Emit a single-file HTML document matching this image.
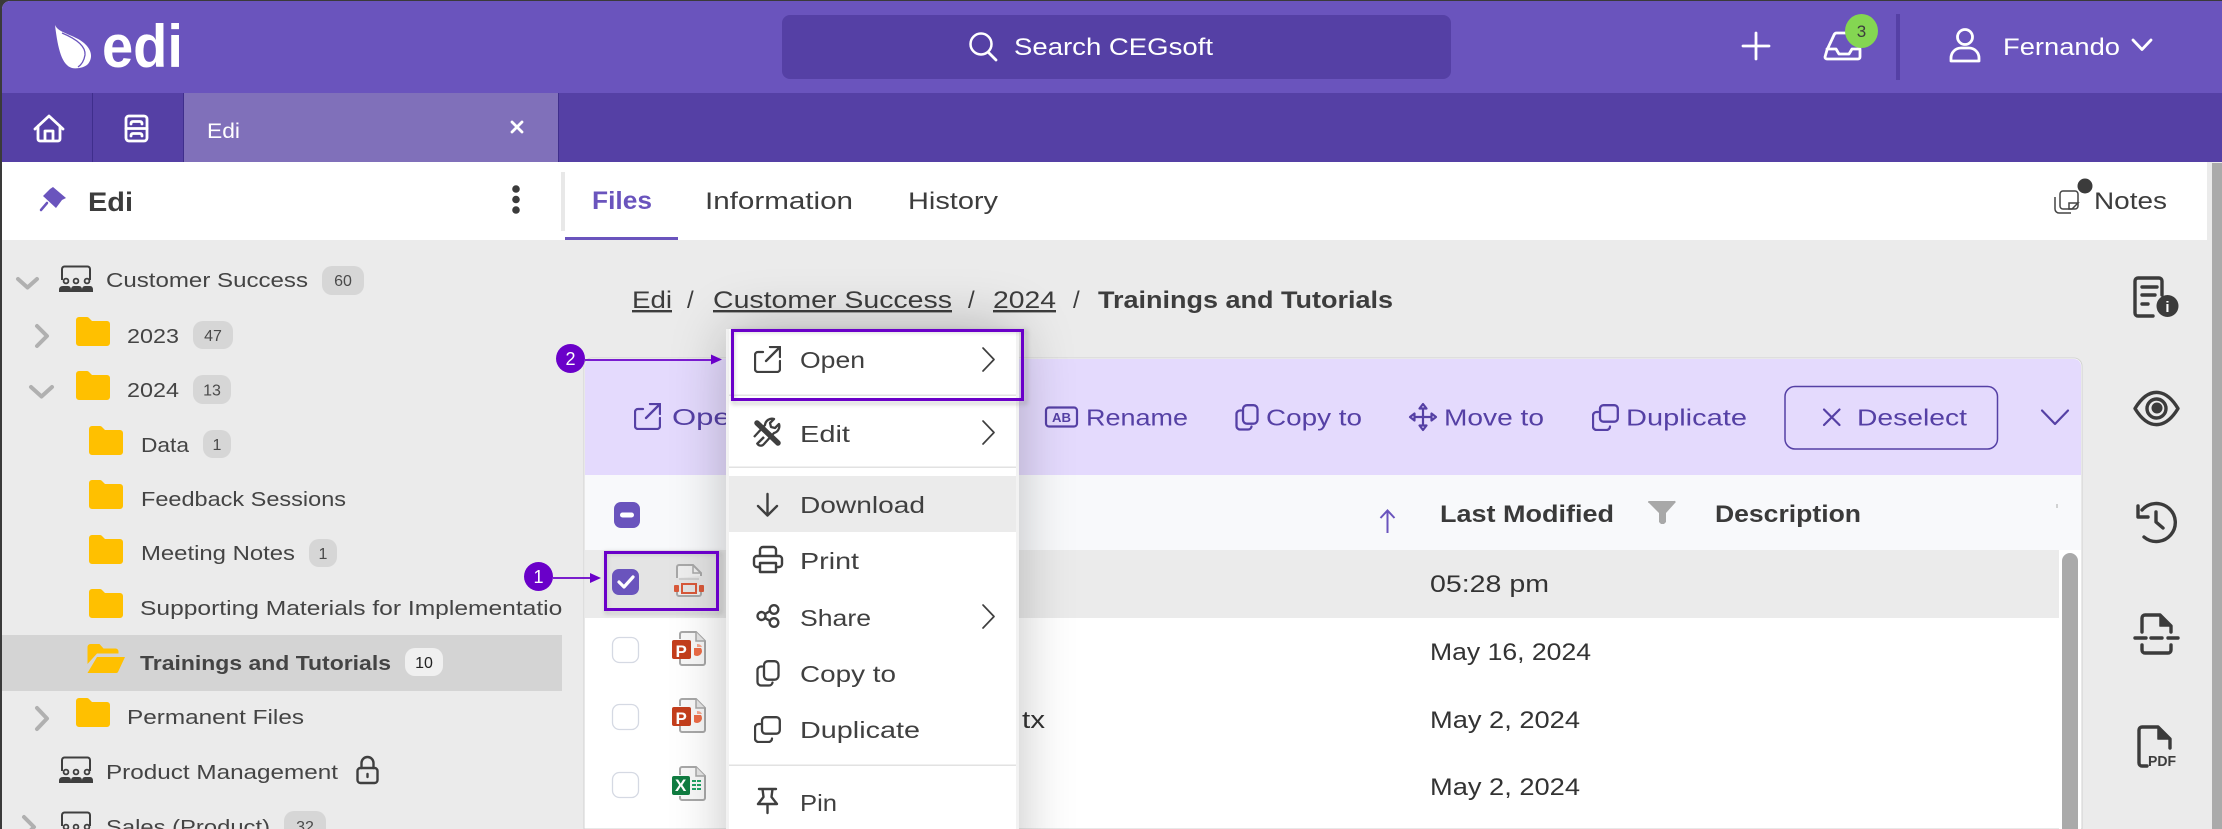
<!DOCTYPE html>
<html lang="en"><head><meta charset="utf-8"><title>Edi</title>
<style>
html,body{margin:0;padding:0;width:2222px;height:829px;overflow:hidden;background:#ebebeb}
svg{display:block}
text{font-family:"Liberation Sans",sans-serif;fill:#3d3d3d}
.t{font-size:20.5px;fill:#444}
.m{font-size:23.5px;fill:#404040}
.b{font-size:23.5px;fill:#5540a5}
.d{font-size:24px;fill:#333}
.h{font-size:24px;font-weight:700;fill:#3a3a3a}
.c{font-size:16px;text-anchor:middle;fill:#4a4a4a}
.w{fill:#fff}
.i{fill:none;stroke:#3f3f3f;stroke-width:2.4;stroke-linecap:round;stroke-linejoin:round}
.p{fill:none;stroke:#5540a5;stroke-width:2.2;stroke-linecap:round;stroke-linejoin:round}
.wi{fill:none;stroke:#fff;stroke-width:2.8;stroke-linecap:round;stroke-linejoin:round}
.g{fill:none;stroke:#b0b0b0;stroke-width:4;stroke-linecap:round;stroke-linejoin:round}
.n{fill:none;stroke:#3b3b3b;stroke-width:3.4;stroke-linecap:round;stroke-linejoin:round}
.cv{fill:none;stroke:#3f3f3f;stroke-width:1.7;stroke-linecap:round;stroke-linejoin:round}
</style></head><body>
<svg width="2222" height="829" viewBox="0 0 2222 829" xmlns="http://www.w3.org/2000/svg">
<defs>
<filter id="bl" x="-60%" y="-60%" width="220%" height="220%"><feGaussianBlur stdDeviation="30"/></filter>
<filter id="sb" x="-10%" y="-10%" width="120%" height="120%"><feGaussianBlur stdDeviation="2"/></filter>
<symbol id="folder" width="34" height="29" viewBox="0 0 34 29"><path d="M3 0h8a3 3 0 0 1 2 1l3 3h15a3 3 0 0 1 3 3v19a3 3 0 0 1-3 3H3a3 3 0 0 1-3-3V3a3 3 0 0 1 3-3z" fill="#ffc000"/></symbol>
<symbol id="team" width="34" height="28" viewBox="0 0 34 28"><path d="M3 15V4a2.5 2.5 0 0 1 2.5-2.5h23A2.5 2.5 0 0 1 31 4v11" fill="none" stroke="#3f3f3f" stroke-width="2"/><circle cx="7" cy="16" r="2.4" fill="none" stroke="#3f3f3f" stroke-width="1.8"/><circle cx="17" cy="16" r="2.4" fill="none" stroke="#3f3f3f" stroke-width="1.8"/><circle cx="28" cy="16" r="2.4" fill="none" stroke="#3f3f3f" stroke-width="1.8"/><path d="M0 27v-2q0-4 4-4h5q3 0 3 4v2zM12 27v-2q0-4 3-4h5q3 0 3 4v2zM23 27v-2q0-4 3-4h5q3 0 3 4v2z" fill="#3f3f3f"/></symbol>
<symbol id="open" width="27" height="27" viewBox="0 0 27 27"><path d="M9 6H4a3 3 0 0 0-3 3v14a3 3 0 0 0 3 3h19a3 3 0 0 0 3-3v-8M12 15L25 2M16 1h10v10" fill="none" stroke="currentColor" stroke-width="2.3" stroke-linecap="round" stroke-linejoin="round"/></symbol>
<symbol id="copy" width="24" height="27" viewBox="0 0 24 27"><rect x="8" y="1.2" width="14.5" height="18.5" rx="4" fill="none" stroke="currentColor" stroke-width="2.3"/><path d="M6 6.5H5a3.5 3.5 0 0 0-3.5 3.5v12A3.5 3.5 0 0 0 5 25.5h8a3.5 3.5 0 0 0 3.5-3" fill="none" stroke="currentColor" stroke-width="2.3" stroke-linecap="round"/></symbol>
<symbol id="dup" width="27" height="27" viewBox="0 0 27 27"><rect x="8" y="1.2" width="17.8" height="16.5" rx="3.5" fill="none" stroke="currentColor" stroke-width="2.3"/><path d="M6 8H4.5A3.5 3.5 0 0 0 1 11.5v11A3.5 3.5 0 0 0 4.5 26h10a3.5 3.5 0 0 0 3.5-3.5" fill="none" stroke="currentColor" stroke-width="2.3" stroke-linecap="round"/></symbol>
<symbol id="ppt" width="34" height="35" viewBox="0 0 34 35"><path d="M8 8V3a2 2 0 0 1 2-2h14l9 9v22a2 2 0 0 1-2 2H10a2 2 0 0 1-2-2v-5" fill="#f8f8f8" stroke="#a8a8a8" stroke-width="2"/><path d="M24 1v9h9" fill="#e6e6e6" stroke="#a8a8a8" stroke-width="1.5"/><rect x="0" y="9" width="19" height="19" rx="2" fill="#c43e1c"/><path d="M22 17v7a5 5 0 0 0 7-7z" fill="#ed6c47"/><path d="M25 13a5 5 0 0 1 5 3h-5z" fill="#f6a78f"/></symbol>
<clipPath id="cl"><rect x="0" y="0" width="2222" height="829"/></clipPath>
</defs>
<g clip-path="url(#cl)">

<!-- top bar -->
<rect width="2222" height="829" fill="#3a3a3a"/>
<path d="M10 1H2222V829H2V9a8 8 0 0 1 8-8z" fill="#ebebeb"/>
<path d="M10 1H2222V94H2V9a8 8 0 0 1 8-8z" fill="#6a54bd"/>
<rect x="2" y="93" width="2220" height="69" fill="#5540a5"/>
<rect x="184" y="93" width="374" height="69" fill="#8070ba"/>
<rect x="92" y="93" width="1" height="69" fill="#3f2e8c"/>
<rect x="183" y="93" width="1" height="69" fill="#3f2e8c"/>
<rect x="558" y="93" width="1" height="69" fill="#3f2e8c"/>
<path d="M55 25C58 33 75 35 84 43C92 50 93 58 88 64C84 68 76 69 72 68C62 65 58 50 55 25z" fill="#fff"/>
<path d="M62 33C74 38 86 45 85 55C84 61 81 65 78 67" fill="none" stroke="#6a54bd" stroke-width="1.3"/>
<text x="102" y="67" font-size="60" font-weight="700" textLength="81" lengthAdjust="spacingAndGlyphs" class="w">edi</text>
<rect x="782" y="15" width="669" height="64" rx="8" fill="#5540a5"/>
<circle cx="981" cy="44" r="10.5" fill="none" stroke="#fff" stroke-width="2.5"/><path d="M989 53l7 7" class="wi"/>
<text x="1014" y="55" font-size="24" textLength="199" lengthAdjust="spacingAndGlyphs" class="w">Search CEGsoft</text>
<path d="M1756 33v26M1743 46h26" class="wi"/>
<path d="M1827 50L1834 35a3 3 0 0 1 3-2h17a3 3 0 0 1 3 2l3 15v7a2 2 0 0 1-2 2h-31a2 2 0 0 1-2-2zM1827 49h9l3 5h10l3-5h8" class="wi" stroke-width="3"/>
<ellipse cx="1861.5" cy="31" rx="16.5" ry="17" fill="#84d652"/>
<text x="1861.5" y="37" font-size="17" text-anchor="middle">3</text>
<rect x="1896" y="14" width="4" height="66" fill="#5540a5"/>
<circle cx="1965" cy="37" r="7.5" class="wi"/><path d="M1951 61v-3a10 10 0 0 1 10-10h8a10 10 0 0 1 10 10v3z" class="wi"/>
<text x="2003" y="55" font-size="24" textLength="117" lengthAdjust="spacingAndGlyphs" class="w">Fernando</text>
<path d="M2133 40l9 9.5 9-9.5" class="wi"/>

<!-- tabs -->
<path d="M35 129L49 116L63 129M38 126v13a2 2 0 0 0 2 2h18a2 2 0 0 0 2-2v-13M45 141v-10h8v10" class="wi"/>
<rect x="126" y="116" width="21" height="25" rx="3" class="wi"/><path d="M126 128.5h21M131 124q0-2.500 2-2.500h7q2 0 2 2.500M131 136q0-2.500 2-2.500h7q2 0 2 2.500" class="wi" stroke-width="2"/>
<text x="207" y="138" font-size="21" textLength="33" lengthAdjust="spacingAndGlyphs" class="w">Edi</text>
<path d="M512 122l10 10M522 122l-10 10" class="wi" stroke-width="1.6"/>

<!-- sub header -->
<rect x="2" y="162" width="2205" height="78" fill="#fff"/>
<path d="M53 187l13 11-4 2-6 8-13-12 7-7z" fill="#6a54bd"/><path d="M47 203l-6 7" stroke="#6a54bd" stroke-width="2.5" stroke-linecap="round"/>
<text x="88" y="211" font-size="27" font-weight="700" textLength="45" lengthAdjust="spacingAndGlyphs">Edi</text>
<circle cx="516" cy="189" r="3.8" fill="#3b3b3b"/><circle cx="516" cy="199.5" r="3.8" fill="#3b3b3b"/><circle cx="516" cy="210" r="3.8" fill="#3b3b3b"/>
<rect x="561" y="172" width="4" height="59" fill="#e8e8e8"/>
<text x="592" y="209" font-size="25" font-weight="700" textLength="60" lengthAdjust="spacingAndGlyphs" style="fill:#6a54bd">Files</text>
<rect x="565" y="237" width="113" height="3" fill="#6a54bd"/>
<text x="705" y="209" font-size="24" textLength="148" lengthAdjust="spacingAndGlyphs">Information</text>
<text x="908" y="209" font-size="24" textLength="90" lengthAdjust="spacingAndGlyphs">History</text>
<rect x="2060" y="191" width="18" height="18" rx="3" fill="none" stroke="#444" stroke-width="1.5"/><path d="M2055 197v12a4 4 0 0 0 4 4h12M2078 203l-6 6h-3v-6z" fill="none" stroke="#444" stroke-width="1.5"/>
<circle cx="2085" cy="186" r="7.5" fill="#3b3b3b"/>
<text x="2094" y="209" font-size="24" textLength="73" lengthAdjust="spacingAndGlyphs">Notes</text>
<rect x="2212" y="163" width="10" height="666" fill="#aaa"/>

<!-- tree -->
<path d="M18 279l9.5 8.500 9.500-8.500" class="g"/>
<use href="#team" x="59" y="265"/>
<text x="106" y="287" class="t" textLength="202" lengthAdjust="spacingAndGlyphs">Customer Success</text>
<rect x="322" y="266" width="42" height="29" rx="10" fill="#d6d6d6"/><text x="343" y="286" class="c">60</text>

<path d="M37 326l10 10-10 10" class="g"/>
<use href="#folder" x="76" y="317"/>
<text x="127" y="343" class="t" textLength="52" lengthAdjust="spacingAndGlyphs">2023</text>
<rect x="193" y="321" width="40" height="28" rx="10" fill="#d6d6d6"/><text x="213" y="341" class="c">47</text>

<path d="M31 387l10.5 9.500 10.500-9.500" class="g"/>
<use href="#folder" x="76" y="371"/>
<text x="127" y="397" class="t" textLength="52" lengthAdjust="spacingAndGlyphs">2024</text>
<rect x="193" y="375" width="38" height="29" rx="10" fill="#d6d6d6"/><text x="212" y="395.5" class="c">13</text>

<use href="#folder" x="89" y="426"/>
<text x="141" y="452" class="t" textLength="48" lengthAdjust="spacingAndGlyphs">Data</text>
<rect x="203" y="430" width="28" height="28" rx="10" fill="#d6d6d6"/><text x="217" y="450" class="c">1</text>

<use href="#folder" x="89" y="480"/>
<text x="141" y="506" class="t" textLength="205" lengthAdjust="spacingAndGlyphs">Feedback Sessions</text>

<use href="#folder" x="89" y="535"/>
<text x="141" y="560" class="t" textLength="154" lengthAdjust="spacingAndGlyphs">Meeting Notes</text>
<rect x="309" y="539" width="28" height="28" rx="10" fill="#d6d6d6"/><text x="323" y="559" class="c">1</text>

<use href="#folder" x="89" y="589"/>
<text x="140" y="615" class="t" textLength="436" lengthAdjust="spacingAndGlyphs">Supporting Materials for Implementation</text>

<rect x="2" y="635" width="560" height="56" fill="#d4d4d4"/>
<path d="M87.5 664V647a3 3 0 0 1 3-3h9l4 4.500h12a3 3 0 0 1 3 3v2H97z" fill="#ffc000"/><path d="M97 657h28l-7 15a2 2 0 0 1-2 1H87.5z" fill="#ffc000"/>
<text x="140" y="670" class="t" font-weight="700" textLength="251" lengthAdjust="spacingAndGlyphs">Trainings and Tutorials</text>
<rect x="405" y="648" width="38" height="28" rx="10" fill="#f0f0f0"/><text x="424" y="668" class="c" style="fill:#222">10</text>

<path d="M37 708l10 10.5-10 10.500" class="g"/>
<use href="#folder" x="76" y="698"/>
<text x="127" y="724" class="t" textLength="177" lengthAdjust="spacingAndGlyphs">Permanent Files</text>

<use href="#team" x="59" y="756"/>
<text x="106" y="779" class="t" textLength="232" lengthAdjust="spacingAndGlyphs">Product Management</text>
<rect x="357.5" y="768" width="20" height="15" rx="3" class="i" stroke-width="2"/><path d="M361.5 768v-5a6 6 0 0 1 12 0v5M367.500 774v3" class="i" stroke-width="2"/>

<path d="M24 817l10 10-10 10" class="g"/>
<use href="#team" x="59" y="811"/>
<text x="106" y="834" class="t" textLength="164" lengthAdjust="spacingAndGlyphs">Sales (Product)</text>
<rect x="284" y="811" width="42" height="29" rx="10" fill="#d6d6d6"/><text x="305" y="832" class="c">32</text>
<rect x="562" y="240" width="1520" height="589" fill="#ebebeb"/>

<!-- breadcrumb -->
<text x="632" y="308" font-size="24" textLength="40" lengthAdjust="spacingAndGlyphs" text-decoration="underline">Edi</text>
<text x="687" y="308" font-size="24">/</text>
<text x="713" y="308" font-size="24" textLength="239" lengthAdjust="spacingAndGlyphs" text-decoration="underline">Customer Success</text>
<text x="968" y="308" font-size="24">/</text>
<text x="993" y="308" font-size="24" textLength="63" lengthAdjust="spacingAndGlyphs" text-decoration="underline">2024</text>
<text x="1073" y="308" font-size="24">/</text>
<text x="1098" y="308" font-size="24" font-weight="700" textLength="295" lengthAdjust="spacingAndGlyphs">Trainings and Tutorials</text>

<!-- table panel -->
<path d="M584 366a8 8 0 0 1 8-8h1482a8 8 0 0 1 8 8v463H584z" fill="#fff" stroke="#d2d2d2" stroke-width="1"/>
<path d="M585 366a7 7 0 0 1 7-7h1482a7 7 0 0 1 7 7v109H585z" fill="#e4dafd"/>
<rect x="585" y="475" width="1496" height="75" fill="#f8f9fb"/>
<rect x="585" y="550" width="1474" height="68" fill="#ebebeb"/>
<rect x="2059" y="550" width="22" height="279" fill="#fff"/>
<path d="M2062 561a8 8 0 0 1 16 0v268h-16z" fill="#aaa"/>

<g style="color:#5540a5">
<use href="#open" x="634" y="403"/>
<text x="672" y="425" class="b" textLength="76" lengthAdjust="spacingAndGlyphs">Open</text>
<rect x="1046" y="407.5" width="31" height="19" rx="3" class="p"/>
<text x="1052" y="422" font-size="12.5" font-weight="700" style="fill:#5540a5" textLength="19" lengthAdjust="spacingAndGlyphs">AB</text>
<text x="1086" y="425.5" class="b" textLength="102" lengthAdjust="spacingAndGlyphs">Rename</text>
<use href="#copy" x="1235" y="404"/>
<text x="1266" y="425.5" class="b" textLength="96" lengthAdjust="spacingAndGlyphs">Copy to</text>
<path d="M1423 410v14M1416 417h14M1423 404l-3.500 4.500h7zM1423 430l-3.500-4.500h7zM1410 417l4.500-3.500v7zM1436 417l-4.500-3.500v7z" class="p"/>
<text x="1444" y="425.5" class="b" textLength="100" lengthAdjust="spacingAndGlyphs">Move to</text>
<use href="#dup" x="1592" y="404"/>
<text x="1626" y="425.5" class="b" textLength="121" lengthAdjust="spacingAndGlyphs">Duplicate</text>
</g>
<rect x="1785" y="386.5" width="212.5" height="62.5" rx="10" fill="none" stroke="#5540a5" stroke-width="1.5"/>
<path d="M1824 409.5l15.500 15.500M1839.500 409.500l-15.500 15.500" class="p"/>
<text x="1857" y="425.5" class="b" textLength="110" lengthAdjust="spacingAndGlyphs">Deselect</text>
<path d="M2042 410.5l13 13.500 13-13.500" class="p" stroke-width="1.8"/>

<!-- table header -->
<rect x="614" y="502" width="26" height="26" rx="7" fill="#6a54bd"/><rect x="620" y="512.5" width="14" height="5" rx="2.5" fill="#fff"/>
<path d="M1387.5 511v22M1380.500 518l7-7.500 7 7.500" fill="none" stroke="#6a54bd" stroke-width="2"/>
<text x="1440" y="522" class="h" textLength="174" lengthAdjust="spacingAndGlyphs">Last Modified</text>
<path d="M1649 501h25a1 1 0 0 1 1 2l-9 10v9l-2 2h-3l-2-2v-9l-10-10a1 1 0 0 1 0-2z" fill="#a8a8a8"/>
<text x="1715" y="522" class="h" textLength="146" lengthAdjust="spacingAndGlyphs">Description</text>
<rect x="2056.5" y="504" width="1" height="4" fill="#aaa"/>

<!-- rows -->
<text x="1430" y="592" class="d" textLength="119" lengthAdjust="spacingAndGlyphs">05:28 pm</text>
<text x="1430" y="660" class="d" textLength="161" lengthAdjust="spacingAndGlyphs">May 16, 2024</text>
<text x="1430" y="728" class="d" textLength="150" lengthAdjust="spacingAndGlyphs">May 2, 2024</text>
<text x="1430" y="795" class="d" textLength="150" lengthAdjust="spacingAndGlyphs">May 2, 2024</text>
<text x="1022" y="728" class="d" textLength="23" lengthAdjust="spacingAndGlyphs">tx</text>

<!-- selection -->
<rect x="604" y="551" width="115" height="60" fill="#e4e4e4"/>
<rect x="612" y="569" width="27" height="26" rx="7" fill="#6a54bd"/><path d="M619 582l5 5 9-10" fill="none" stroke="#fff" stroke-width="3.2" stroke-linecap="round" stroke-linejoin="round"/>
<path d="M677 578v-11a2 2 0 0 1 2-2h14l8 8v3M677 592v2a2 2 0 0 0 2 2h20a2 2 0 0 0 2-2v-2" fill="#eee" stroke="#a8a8a8" stroke-width="2"/>
<path d="M693 565v8h8" fill="none" stroke="#a8a8a8" stroke-width="1.5"/><path d="M679 579h20" stroke="#c8c8c8" stroke-width="1.5"/>
<rect x="682" y="584" width="14" height="9" fill="none" stroke="#d9593a" stroke-width="2"/>
<rect x="674" y="585" width="5" height="7" rx="1" fill="#d9593a"/><rect x="699" y="585" width="5" height="7" rx="1" fill="#d9593a"/>

<rect x="612.5" y="637.5" width="26" height="25" rx="7" fill="#fff" stroke="#d5d9e3" stroke-width="1.3"/>
<rect x="612.5" y="704.5" width="26" height="25" rx="7" fill="#fff" stroke="#d5d9e3" stroke-width="1.3"/>
<rect x="612.5" y="772.5" width="26" height="25" rx="7" fill="#fff" stroke="#d5d9e3" stroke-width="1.3"/>
<use href="#ppt" x="672" y="631"/><text x="675.5" y="657" font-size="17" font-weight="700" class="w">P</text>
<use href="#ppt" x="672" y="698"/><text x="675.5" y="724" font-size="17" font-weight="700" class="w">P</text>
<path d="M680 775v-6a2 2 0 0 1 2-2h14l9 9v22a2 2 0 0 1-2 2h-21a2 2 0 0 1-2-2v-2" fill="#f8f8f8" stroke="#a8a8a8" stroke-width="2"/><path d="M696 767v9h9" fill="#e6e6e6" stroke="#a8a8a8" stroke-width="1.5"/>
<rect x="672" y="776" width="18" height="19" rx="2" fill="#107c41"/><text x="675" y="791" font-size="17" font-weight="700" class="w">X</text>
<path d="M692 781h10M692 785h10M692 789h10" stroke="#21a366" stroke-width="2" stroke-dasharray="4 1"/>

<!-- menu shadow + menu -->
<rect x="729" y="329" width="287" height="560" fill="#000" opacity=".26" filter="url(#bl)"/>
<rect x="604" y="551" width="115" height="60" fill="none" stroke="#888" stroke-width="3" opacity=".35" transform="translate(2 2)" filter="url(#sb)"/>
<rect x="605.5" y="552.5" width="112" height="57" fill="none" stroke="#6a00c9" stroke-width="3"/>
<rect x="726" y="329" width="293" height="500" fill="#f2f2f2"/>
<rect x="729" y="329" width="287" height="500" fill="#fff"/>
<rect x="729" y="476" width="287" height="56" fill="#ebebeb"/>
<rect x="729" y="394.5" width="287" height="1.5" fill="#e2e2e2"/>
<rect x="729" y="466.5" width="287" height="1.5" fill="#e2e2e2"/>
<rect x="729" y="764.5" width="287" height="1.5" fill="#e2e2e2"/>

<g style="color:#3f3f3f">
<use href="#open" x="754" y="346"/>
<text x="800" y="368" class="m" textLength="65" lengthAdjust="spacingAndGlyphs">Open</text>
<path d="M983 348l11 11.5-11 11.500" class="cv"/>
<path d="M757 423l21 20" stroke="#3f3f3f" stroke-width="5.5" stroke-linecap="round"/>
<path d="M764 437l-7 7" stroke="#3f3f3f" stroke-width="2.5" fill="none"/><path d="M757 443a4 4 0 0 0 7 1l10-11a7 7 0 0 0 5-9l-4 4-4-1-1-4 4-4a7 7 0 0 0-9 6l-11 12" fill="none" stroke="#3f3f3f" stroke-width="2.3" stroke-linejoin="round"/>
<text x="800" y="442" class="m" textLength="50" lengthAdjust="spacingAndGlyphs">Edit</text>
<path d="M983 421l11 11.5-11 11.500" class="cv"/>
<path d="M767.5 494v21M758 506l9.500 9.500 9.500-9.500" class="i"/>
<text x="800" y="513" class="m" textLength="125" lengthAdjust="spacingAndGlyphs">Download</text>
<path d="M760 556v-6a3 3 0 0 1 3-3h10a3 3 0 0 1 3 3v6M760 567h-3a3 3 0 0 1-3-3v-5a3 3 0 0 1 3-3h22a3 3 0 0 1 3 3v5a3 3 0 0 1-3 3h-3M760 563h16v9h-16z" class="i"/>
<text x="800" y="569" class="m" textLength="59" lengthAdjust="spacingAndGlyphs">Print</text>
<circle cx="761.5" cy="616" r="4" class="i"/><circle cx="774" cy="609.5" r="4.3" class="i"/><circle cx="774" cy="622.5" r="4.3" class="i"/><path d="M765 614l5-3M765 618l5 3" class="i"/>
<text x="800" y="626" class="m" textLength="71" lengthAdjust="spacingAndGlyphs">Share</text>
<path d="M983 605l11 11.5-11 11.500" class="cv"/>
<use href="#copy" x="756" y="660"/>
<text x="800" y="682" class="m" textLength="96" lengthAdjust="spacingAndGlyphs">Copy to</text>
<use href="#dup" x="754" y="716"/>
<text x="800" y="738" class="m" textLength="120" lengthAdjust="spacingAndGlyphs">Duplicate</text>
<path d="M759 789h17M762.5 789l1 8-5.500 7h19l-5.500-7 1-8M767.500 804v9" class="i"/>
<text x="800" y="811" class="m" textLength="37" lengthAdjust="spacingAndGlyphs">Pin</text>
</g>

<!-- highlight 2 -->
<rect x="731" y="329" width="293" height="72" fill="none" stroke="#888" stroke-width="3" opacity=".4" transform="translate(2 2)" filter="url(#sb)"/>
<rect x="732.5" y="330.5" width="290" height="69" fill="none" stroke="#6a00c9" stroke-width="3"/>

<!-- callouts -->
<path d="M553 578h40" stroke="#6a00c9" stroke-width="1.8"/><path d="M590 573l11 5-11 5z" fill="#6a00c9"/>
<circle cx="538.5" cy="576.5" r="14.5" fill="#6a00c9"/>
<text x="538.5" y="583" font-size="18" text-anchor="middle" class="w">1</text>
<path d="M585 360h130" stroke="#6a00c9" stroke-width="1.8"/><path d="M711 354.5l11 5-11 5z" fill="#6a00c9"/>
<circle cx="570.5" cy="358.5" r="14.5" fill="#6a00c9"/>
<text x="570.5" y="365" font-size="18" text-anchor="middle" class="w">2</text>

<!-- right rail -->
<path d="M2153 316h-15a3 3 0 0 1-3-3v-32a3 3 0 0 1 3-3h21a3 3 0 0 1 3 3v14" class="n"/>
<path d="M2142 287h15M2142 295h13M2142 304h6" class="n"/>
<circle cx="2167.5" cy="306" r="11" fill="#3b3b3b"/><text x="2167.5" y="312" font-size="15" font-weight="700" text-anchor="middle" class="w">i</text>
<path d="M2135 408.5C2148 387 2165 387 2178 408.5C2165 430 2148 430 2135 408.5z" class="n"/>
<circle cx="2156.5" cy="408.5" r="9.5" class="n" stroke-width="2.8"/><circle cx="2157" cy="408" r="5.5" fill="#3b3b3b"/>
<path d="M2142 510A19 19 0 1 1 2144 537" class="n"/><path d="M2138 506v11h10" class="n"/><path d="M2156 512v10l7 6" class="n"/>
<path d="M2142 632v-14a3 3 0 0 1 3-3h15l11 11v6M2142 645v5a3 3 0 0 0 3 3h23a3 3 0 0 0 3-3v-5M2135 638h11M2151 638h11M2168 638h10" class="n"/>
<path d="M2160 615v11h11z" fill="#3b3b3b" stroke="#3b3b3b" stroke-width="1.5" stroke-linejoin="round"/>
<path d="M2147 766h-5a3 3 0 0 1-3-3v-33a3 3 0 0 1 3-3h16l12 12v9" class="n"/>
<path d="M2158 728v11h12z" fill="#3b3b3b" stroke="#3b3b3b" stroke-width="1.5" stroke-linejoin="round"/>
<text x="2148" y="766" font-size="15" font-weight="700" textLength="28" lengthAdjust="spacingAndGlyphs">PDF</text>
</g>
</svg>
</body></html>
